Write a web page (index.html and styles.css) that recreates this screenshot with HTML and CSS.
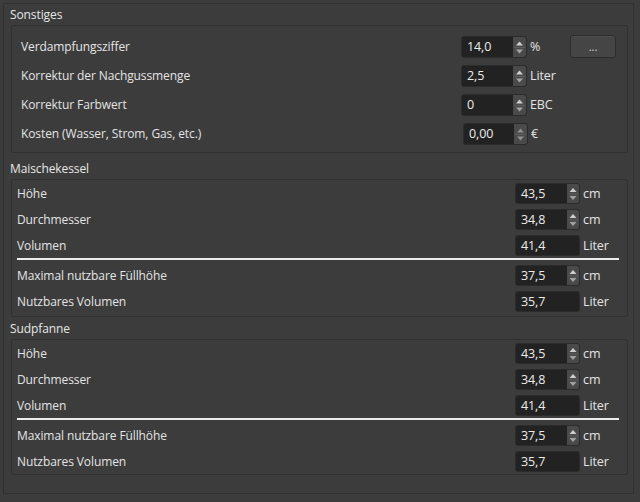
FILE: index.html
```html
<!DOCTYPE html>
<html lang="de">
<head>
<meta charset="utf-8">
<title>Sonstiges</title>
<link rel="stylesheet" href="styles.css">
</head>
<body>
<div class="frame">
  <div class="group-title t-sonst">Sonstiges</div>
  <div class="group sonst">
    <div class="srow">
      <span class="label">Verdampfungsziffer</span>
      <div class="spin"><span class="val">14,0</span><span class="arrows"><svg viewBox="0 0 13 20" width="13" height="20"><polygon points="3,8.5 6.5,4.5 10,8.5" fill="#cfcfcf"/><line x1="1" y1="10.5" x2="12" y2="10.5" stroke="#5d5d5d"/><polygon points="3,12.5 10,12.5 6.5,16.5" fill="#a3a3a3"/></svg></span></div>
      <span class="unit">%</span>
      <button class="dots">...</button>
    </div>
    <div class="srow">
      <span class="label">Korrektur der Nachgussmenge</span>
      <div class="spin"><span class="val">2,5</span><span class="arrows"><svg viewBox="0 0 13 20" width="13" height="20"><polygon points="3,8.5 6.5,4.5 10,8.5" fill="#cfcfcf"/><line x1="1" y1="10.5" x2="12" y2="10.5" stroke="#5d5d5d"/><polygon points="3,12.5 10,12.5 6.5,16.5" fill="#a3a3a3"/></svg></span></div>
      <span class="unit">Liter</span>
      <span></span>
    </div>
    <div class="srow">
      <span class="label">Korrektur Farbwert</span>
      <div class="spin"><span class="val">0</span><span class="arrows"><svg viewBox="0 0 13 20" width="13" height="20"><polygon points="3,8.5 6.5,4.5 10,8.5" fill="#cfcfcf"/><line x1="1" y1="10.5" x2="12" y2="10.5" stroke="#5d5d5d"/><polygon points="3,12.5 10,12.5 6.5,16.5" fill="#a3a3a3"/></svg></span></div>
      <span class="unit">EBC</span>
      <span></span>
    </div>
    <div class="srow">
      <span class="label">Kosten (Wasser, Strom, Gas, etc.)</span>
      <div class="spin shifted"><span class="val">0,00</span><span class="arrows"><svg viewBox="0 0 13 20" width="13" height="20"><polygon points="3,8.5 6.5,4.5 10,8.5" fill="#8f8f8f"/><line x1="1" y1="10.5" x2="12" y2="10.5" stroke="#5d5d5d"/><polygon points="3,12.5 10,12.5 6.5,16.5" fill="#8f8f8f"/></svg></span></div>
      <span class="unit unit-shift">€</span>
      <span></span>
    </div>
  </div>

  <div class="group-title t-mk">Maischekessel</div>
  <div class="group vessel mk">
    <div class="vrow">
      <span class="label">Höhe</span>
      <div class="spin small"><span class="val">43,5</span><span class="arrows"><svg viewBox="0 0 12 19" width="12" height="19"><polygon points="2.5,8 6,4 9.5,8" fill="#cfcfcf"/><line x1="1" y1="10" x2="11" y2="10" stroke="#5d5d5d"/><polygon points="2.5,12 9.5,12 6,16" fill="#a3a3a3"/></svg></span></div>
      <span class="unit">cm</span>
    </div>
    <div class="vrow">
      <span class="label">Durchmesser</span>
      <div class="spin small"><span class="val">34,8</span><span class="arrows"><svg viewBox="0 0 12 19" width="12" height="19"><polygon points="2.5,8 6,4 9.5,8" fill="#cfcfcf"/><line x1="1" y1="10" x2="11" y2="10" stroke="#5d5d5d"/><polygon points="2.5,12 9.5,12 6,16" fill="#a3a3a3"/></svg></span></div>
      <span class="unit">cm</span>
    </div>
    <div class="vrow">
      <span class="label">Volumen</span>
      <div class="spin small"><span class="val">41,4</span></div>
      <span class="unit">Liter</span>
    </div>
    <div class="sep"></div>
    <div class="vrow">
      <span class="label">Maximal nutzbare Füllhöhe</span>
      <div class="spin small"><span class="val">37,5</span><span class="arrows"><svg viewBox="0 0 12 19" width="12" height="19"><polygon points="2.5,8 6,4 9.5,8" fill="#cfcfcf"/><line x1="1" y1="10" x2="11" y2="10" stroke="#5d5d5d"/><polygon points="2.5,12 9.5,12 6,16" fill="#a3a3a3"/></svg></span></div>
      <span class="unit">cm</span>
    </div>
    <div class="vrow last">
      <span class="label">Nutzbares Volumen</span>
      <div class="spin small"><span class="val">35,7</span></div>
      <span class="unit">Liter</span>
    </div>
  </div>

  <div class="group-title t-sud">Sudpfanne</div>
  <div class="group vessel sud">
    <div class="vrow">
      <span class="label">Höhe</span>
      <div class="spin small"><span class="val">43,5</span><span class="arrows"><svg viewBox="0 0 12 19" width="12" height="19"><polygon points="2.5,8 6,4 9.5,8" fill="#cfcfcf"/><line x1="1" y1="10" x2="11" y2="10" stroke="#5d5d5d"/><polygon points="2.5,12 9.5,12 6,16" fill="#a3a3a3"/></svg></span></div>
      <span class="unit">cm</span>
    </div>
    <div class="vrow">
      <span class="label">Durchmesser</span>
      <div class="spin small"><span class="val">34,8</span><span class="arrows"><svg viewBox="0 0 12 19" width="12" height="19"><polygon points="2.5,8 6,4 9.5,8" fill="#cfcfcf"/><line x1="1" y1="10" x2="11" y2="10" stroke="#5d5d5d"/><polygon points="2.5,12 9.5,12 6,16" fill="#a3a3a3"/></svg></span></div>
      <span class="unit">cm</span>
    </div>
    <div class="vrow">
      <span class="label">Volumen</span>
      <div class="spin small"><span class="val">41,4</span></div>
      <span class="unit">Liter</span>
    </div>
    <div class="sep"></div>
    <div class="vrow">
      <span class="label">Maximal nutzbare Füllhöhe</span>
      <div class="spin small"><span class="val">37,5</span><span class="arrows"><svg viewBox="0 0 12 19" width="12" height="19"><polygon points="2.5,8 6,4 9.5,8" fill="#cfcfcf"/><line x1="1" y1="10" x2="11" y2="10" stroke="#5d5d5d"/><polygon points="2.5,12 9.5,12 6,16" fill="#a3a3a3"/></svg></span></div>
      <span class="unit">cm</span>
    </div>
    <div class="vrow last">
      <span class="label">Nutzbares Volumen</span>
      <div class="spin small"><span class="val">35,7</span></div>
      <span class="unit">Liter</span>
    </div>
  </div>
</div>
</body>
</html>
```

FILE: styles.css
```css
* { box-sizing: border-box; }

html, body {
  margin: 0;
  padding: 0;
  background: #3c3c3c;
}

body {
  font-family: "Open Sans", "DejaVu Sans", sans-serif;
  font-size: 12px;
  letter-spacing: -0.1px;
  color: #e4e4e4;
  width: 640px;
  height: 502px;
  overflow: hidden;
}

.frame {
  margin: 3px 0 0 3px;
  width: 631px;
  height: 491px;
  border: 1px solid #313131;
  padding: 0 5px 0 7px;
}

.group-title {
  line-height: 21px;
  height: 21px;
  padding-left: 0;
  margin-left: -1px;
  color: #e6e6e6;
}

.t-mk { margin-top: 5px; }
.t-sud { margin-top: 1px; }

.group {
  border: 1px solid #313131;
  border-radius: 2px;
}

.sonst {
  padding: 6px 11px 4px 9px;
}

.srow {
  display: grid;
  grid-template-columns: 1fr 66px 43px 46px;
  height: 29px;
  align-items: center;
}

.vessel {
  padding: 3px 8px 4px 5px;
}

.vessel.sud { padding-bottom: 2px; }

.vrow {
  display: grid;
  grid-template-columns: 1fr 65px 39px;
  height: 21px;
  align-items: center;
  margin-bottom: 5px;
}

.vrow.last { margin-bottom: 0; }

.sep {
  height: 2px;
  background: #ececec;
  margin: -3px 0 5px 0;
}

.label {
  white-space: nowrap;
}

.spin {
  display: flex;
  height: 22px;
  background: #222222;
  border: 1px solid #2b2b2b;
  border-radius: 3px;
  overflow: hidden;
}

.spin.small { height: 21px; }

.spin.shifted {
  margin-left: 2px;
  margin-right: -1px;
}

.val {
  flex: 1;
  padding-left: 5px;
  display: flex;
  align-items: center;
  color: #ececec;
  font-size: 12.5px;
}

.arrows {
  width: 13px;
  background: #4a4a4a;
  display: flex;
  align-items: center;
  justify-content: center;
}

.spin.small .arrows { width: 12px; }

.arrows svg { display: block; }

.unit {
  padding-left: 3px;
  white-space: nowrap;
  font-size: 12.5px;
}

.unit-shift { padding-left: 4px; }

.dots {
  height: 23px;
  width: 46px;
  background: #454545;
  border: 1px solid #2c2c2c;
  border-radius: 3px;
  color: #dcdcdc;
  font-family: "Open Sans", "DejaVu Sans", sans-serif;
  font-size: 11px;
  padding: 0;
  box-shadow: inset 0 1px 0 #4d4d4d;
}
```
